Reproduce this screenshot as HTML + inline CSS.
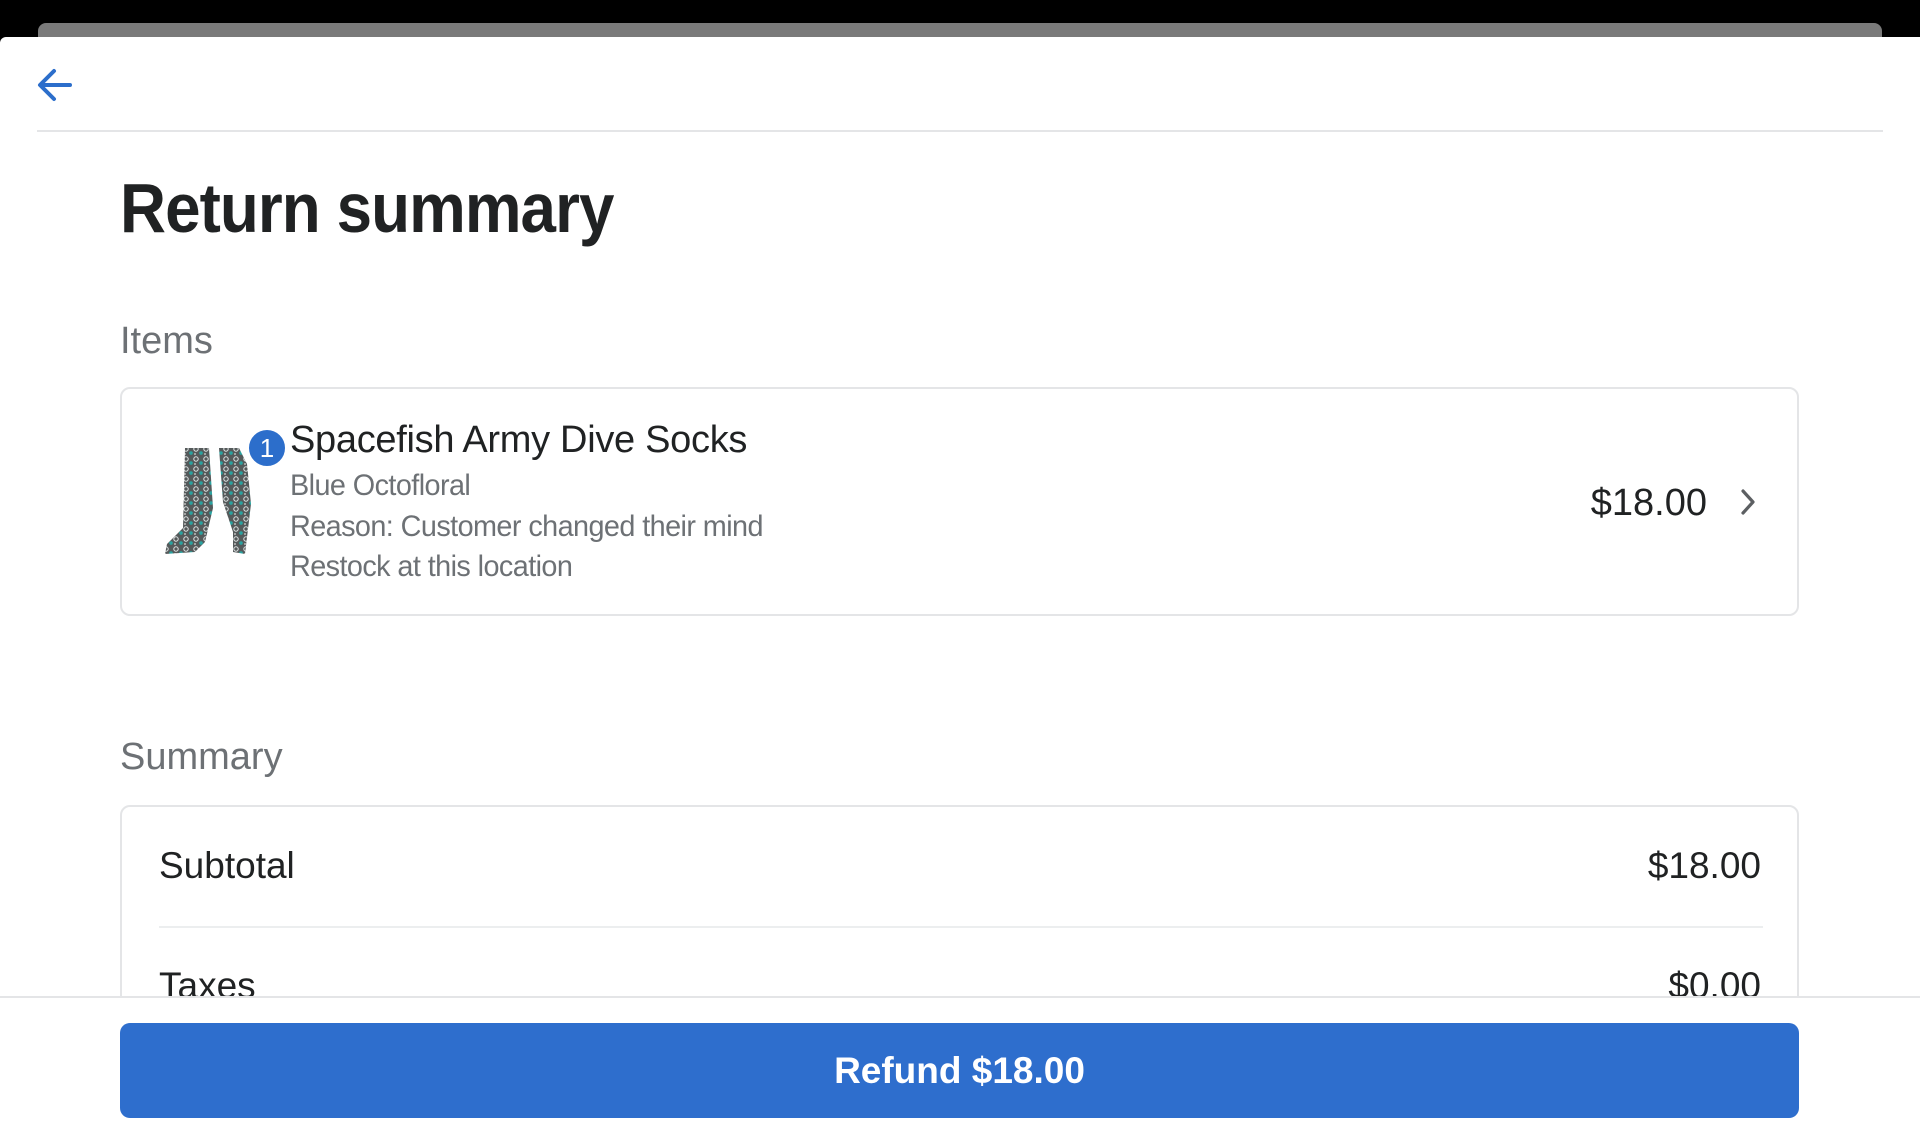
<!DOCTYPE html>
<html><head><meta charset="utf-8"><style>
*{margin:0;padding:0;box-sizing:border-box}
body{width:1920px;height:1141px;background:#000;position:relative;overflow:hidden;font-family:"Liberation Sans",sans-serif;color:#202223}
.abs{position:absolute;line-height:1;white-space:nowrap}
.g{font-size:30px;color:#6d7175;letter-spacing:-0.6px;transform:scaleX(0.96);transform-origin:left}
</style></head><body>
<div style="position:absolute;left:38px;top:23px;width:1844px;height:20px;background:#7a7a7a;border-radius:8px 8px 0 0"></div>
<div style="position:absolute;left:0;top:37px;width:1920px;height:1104px;background:#fff;border-radius:6px 0 0 0"></div>
<svg style="position:absolute;left:36px;top:68px" width="38" height="34" viewBox="0 0 38 34"><path d="M34 17H5M18 3L4 17l14 14" fill="none" stroke="#2c6ecb" stroke-width="4" stroke-linecap="round" stroke-linejoin="round"/></svg>
<div style="position:absolute;left:37px;top:130px;width:1846px;height:2px;background:#e4e5e7"></div>
<div class="abs" style="left:120px;top:173px;font-size:70px;font-weight:bold;letter-spacing:-1px;transform:scaleX(0.91);transform-origin:left">Return summary</div>
<div class="abs" style="left:120px;top:322px;font-size:38px;color:#6d7175">Items</div>
<div style="position:absolute;left:120px;top:387px;width:1679px;height:229px;border:2px solid #e4e5e7;border-radius:10px"></div>
<svg style="position:absolute;left:163px;top:446px" width="98" height="112" viewBox="0 0 98 112">
<defs><pattern id="p" width="10" height="10" patternUnits="userSpaceOnUse"><rect width="10" height="10" fill="#555a5b"/><circle cx="3" cy="3" r="2.2" fill="none" stroke="#e0e4e4" stroke-width="1"/><circle cx="8" cy="7" r="1.8" fill="#2aa3a0"/><circle cx="2" cy="8" r="1" fill="#bbb"/></pattern></defs>
<path d="M22 2h24l4 60-8 34-10 10L2 108l2-10 16-16z" fill="url(#p)"/>
<path d="M56 2h20l8 16 4 40-6 50-12-2 0-20-10-30z" fill="url(#p)"/>
</svg>
<div style="position:absolute;left:246px;top:427px;width:42px;height:42px;border-radius:50%;background:#2c6ecb;border:3px solid #fff;color:#fff;font-size:26px;line-height:36px;text-align:center">1</div>
<div class="abs" style="left:290px;top:421px;font-size:38px;letter-spacing:-0.3px">Spacefish Army Dive Socks</div>
<div class="abs g" style="left:290px;top:471px">Blue Octofloral</div>
<div class="abs g" style="left:290px;top:512px">Reason: Customer changed their mind</div>
<div class="abs g" style="left:290px;top:552px">Restock at this location</div>
<div class="abs" style="right:213px;top:484px;font-size:38px">$18.00</div>
<svg style="position:absolute;left:1738px;top:488px" width="20" height="28" viewBox="0 0 20 28"><path d="M5 3l10 11-10 11" fill="none" stroke="#5c5f62" stroke-width="3.2" stroke-linecap="round" stroke-linejoin="round"/></svg>
<div class="abs" style="left:120px;top:738px;font-size:38px;color:#6d7175">Summary</div>
<div style="position:absolute;left:120px;top:805px;width:1679px;height:300px;border:2px solid #e4e5e7;border-radius:10px"></div>
<div class="abs" style="left:159px;top:847px;font-size:37px">Subtotal</div>
<div class="abs" style="right:159px;top:847px;font-size:37px">$18.00</div>
<div style="position:absolute;left:159px;top:926px;width:1604px;height:2px;background:#eceeef"></div>
<div class="abs" style="left:159px;top:967px;font-size:37px">Taxes</div>
<div class="abs" style="right:159px;top:967px;font-size:37px">$0.00</div>
<div style="position:absolute;left:0;top:996px;width:1920px;height:145px;background:#fff;border-top:2px solid #e4e5e7"></div>
<div style="position:absolute;left:120px;top:1023px;width:1679px;height:95px;background:#2e6ecd;border-radius:10px;color:#fff;font-size:37px;font-weight:bold;text-align:center;line-height:95px">Refund $18.00</div>
</body></html>
